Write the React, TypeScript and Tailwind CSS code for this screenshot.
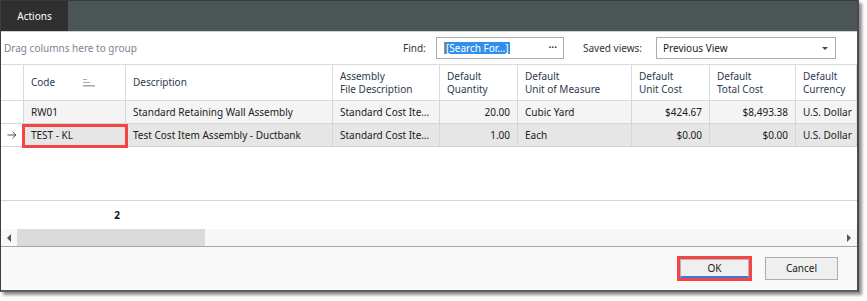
import React from "react";

const font = { fontFamily: '"Noto Sans", "Liberation Sans", sans-serif' };

function SortIcon() {
  return (
    <svg width="12" height="10" viewBox="0 0 12 10" className="shrink-0">
      <rect x="0" y="1" width="4" height="1" fill="#a8a8a8" />
      <rect x="0" y="4" width="7" height="1" fill="#a8a8a8" />
      <rect x="0" y="7" width="12" height="1" fill="#a8a8a8" />
      <rect x="0" y="8" width="12" height="1" fill="#cfcfcf" />
    </svg>
  );
}

function RowArrow() {
  return (
    <svg width="10" height="8" viewBox="0 0 10 8">
      <path d="M0.5 4 H9 M5.5 0.8 L9 4 L5.5 7.2" stroke="#555" strokeWidth="1" fill="none" />
    </svg>
  );
}

const headerCell = "h-full border-r border-[#dadada] flex items-center px-[7px] text-[#2e3a4e] leading-[13px]";
const dataCell = "h-full border-r border-b border-[#d6d6d6] flex items-center px-[7px] whitespace-nowrap overflow-hidden";

function DataRow({ selected, code, desc, asm, qty, uom, unit, total }: {
  selected?: boolean; code: string; desc: string; asm: string; qty: string; uom: string; unit: string; total: string;
}) {
  const bg = selected ? "bg-[#e6e6e6]" : "bg-[#f4f4f4]";
  return (
    <div className="relative flex h-[23px] text-[#202020]">
      <div className="w-[23px] h-full border-r border-b border-[#d6d6d6] bg-white flex items-center justify-center">
        {selected && <RowArrow />}
      </div>
      <div className={`w-[102px] ${dataCell} ${bg}`}>{code}</div>
      <div className={`w-[207px] ${dataCell} ${bg}`}>{desc}</div>
      <div className={`w-[107px] ${dataCell} ${bg}`}>{asm}</div>
      <div className={`w-[78px] justify-end ${dataCell} ${bg}`}>{qty}</div>
      <div className={`w-[114px] ${dataCell} ${bg}`}>{uom}</div>
      <div className={`w-[78px] justify-end ${dataCell} ${bg}`}>{unit}</div>
      <div className={`w-[86px] justify-end ${dataCell} ${bg}`}>{total}</div>
      <div className={`w-[61px] ${dataCell} ${bg}`}>U.S. Dollar</div>
      {selected && (
        <div className="absolute left-[21px] top-0 w-[106px] h-[24px] border-[3px] border-[#f24545]" />
      )}
    </div>
  );
}

export default function App() {
  return (
    <div className="w-[867px] h-[301px] bg-white text-[10px]" style={font}>
      <div className="w-[859px] h-[292px] flex flex-col border-l border-r-2 border-b-2 border-l-[#3e3e3e] border-r-[#4a4a4a] border-b-[#5e5e5e] shadow-[3px_3px_3px_rgba(0,0,0,0.45)] bg-white">
        {/* title bar */}
        <div className="h-[31px] shrink-0 flex bg-[#4b5556] border-t border-[#3a3a3a]">
          <div className="w-[67px] h-full bg-[#2f2f2f] text-white text-[10px] flex items-center justify-center">
            Actions
          </div>
        </div>
        <div className="h-px shrink-0 bg-[#cfcfcf]" />

        {/* toolbar */}
        <div className="h-[32px] shrink-0 flex items-center">
          <span className="pl-[3px] text-[#7b8494] w-[402px]">Drag columns here to group</span>
          <span className="text-[#333] w-[31px]">Find:</span>
          <div className="ml-[2px] w-[128px] h-[22px] border border-[#ababab] bg-white flex items-center pl-[7px] pr-[6px]">
            <div className="w-px h-[12px] bg-[#e07a2a]" />
            <span className="bg-[#3390ea] text-white leading-[12px] px-px">[Search For…]</span>
            <span className="ml-auto text-[#333] font-bold leading-none pb-[3px]">···</span>
          </div>
          <span className="ml-[19px] text-[#333] w-[73px]">Saved views:</span>
          <div className="w-[180px] h-[22px] border border-[#ababab] bg-white flex items-center pl-[6px] pr-[7px]">
            <span className="text-[#202020]">Previous View</span>
            <div className="ml-auto w-0 h-0 border-l-[3px] border-r-[3px] border-t-[3px] border-l-transparent border-r-transparent border-t-[#444]" />
          </div>
        </div>

        {/* grid header */}
        <div className="h-[37px] shrink-0 flex border-t border-b border-[#dadada] bg-white">
          <div className="w-[23px] h-full border-r border-[#dadada]" />
          <div className={`w-[102px] ${headerCell}`}>
            <span className="w-[52px]">Code</span>
            <SortIcon />
          </div>
          <div className={`w-[207px] ${headerCell}`}>Description</div>
          <div className={`w-[107px] ${headerCell}`}>Assembly<br />File Description</div>
          <div className={`w-[78px] ${headerCell}`}>Default<br />Quantity</div>
          <div className={`w-[114px] ${headerCell}`}>Default<br />Unit of Measure</div>
          <div className={`w-[78px] ${headerCell}`}>Default<br />Unit Cost</div>
          <div className={`w-[86px] ${headerCell}`}>Default<br />Total Cost</div>
          <div className={`w-[61px] ${headerCell}`}>Default<br />Currency</div>
        </div>

        {/* rows */}
        <div>
          <DataRow code="RW01" desc="Standard Retaining Wall Assembly" asm="Standard Cost Ite…" qty="20.00" uom="Cubic Yard" unit="$424.67" total="$8,493.38" />
          <DataRow selected code="TEST - KL" desc="Test Cost Item Assembly - Ductbank" asm="Standard Cost Ite…" qty="1.00" uom="Each" unit="$0.00" total="$0.00" />
        </div>

        <div className="flex-1" />

        {/* footer summary */}
        <div className="h-[29px] shrink-0 border-t border-[#d6d6d6] flex items-center">
          <div className="w-[125px] text-right pr-[6px] font-bold text-[#101828]">2</div>
        </div>

        {/* horizontal scrollbar */}
        <div className="h-[17px] shrink-0 bg-[#f7f7f7] flex items-center">
          <div className="w-[16px] flex justify-center">
            <div className="w-0 h-0 border-t-[4px] border-b-[4px] border-r-[4px] border-t-transparent border-b-transparent border-r-[#555]" />
          </div>
          <div className="w-[188px] h-full bg-[#dadada]" />
          <div className="ml-auto w-[16px] flex justify-center">
            <div className="w-0 h-0 border-t-[4px] border-b-[4px] border-l-[4px] border-t-transparent border-b-transparent border-l-[#555]" />
          </div>
        </div>
        <div className="h-px shrink-0 bg-[#a6a6a6]" />

        {/* buttons */}
        <div className="h-[43px] shrink-0 bg-[#f9f9f9] flex items-start pt-[9px]">
          <div className="ml-[676px] w-[75px] h-[25px] border-[3px] border-[#f24545] flex">
            <div className="flex-1 bg-[#efefef] border border-[#b4b4b4] border-b-[2px] border-b-[#3a7bd5] flex items-center justify-center text-[#202020]">
              OK
            </div>
          </div>
          <div className="ml-[13px] mt-px w-[73px] h-[23px] border border-[#adadad] bg-[#efefef] flex items-center justify-center text-[#202020]">
            Cancel
          </div>
        </div>
      </div>
    </div>
  );
}
